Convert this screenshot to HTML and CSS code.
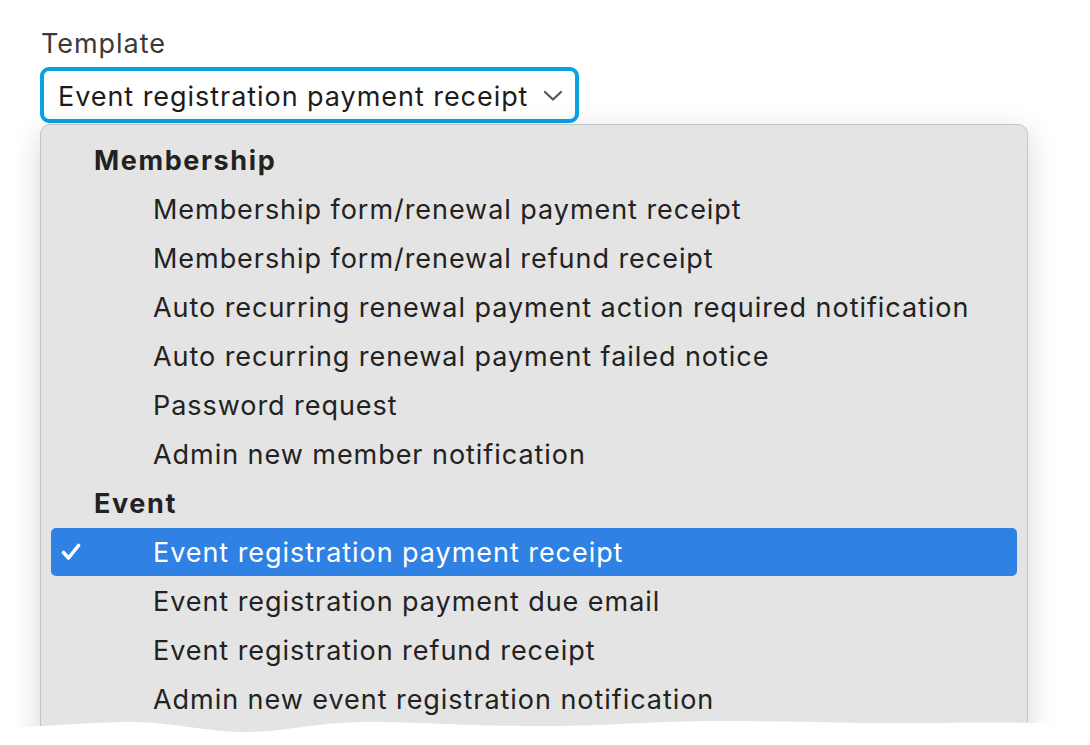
FILE: index.html
```html
<!DOCTYPE html>
<html>
<head>
<meta charset="utf-8">
<link rel="stylesheet" href="styles.css">
</head>
<body>
<div class="field">
  <div class="label">Template</div>
  <div class="select">
    <span class="select-text">Event registration payment receipt</span>
    <svg class="chevron" width="20" height="12" viewBox="0 0 20 12"><path d="M2 2 L10 9.5 L18 2" fill="none" stroke="#555" stroke-width="2.2" stroke-linecap="round" stroke-linejoin="round"/></svg>
  </div>
  <div class="menu">
    <div class="group">Membership</div>
    <div class="item">Membership form/renewal payment receipt</div>
    <div class="item">Membership form/renewal refund receipt</div>
    <div class="item">Auto recurring renewal payment action required notification</div>
    <div class="item">Auto recurring renewal payment failed notice</div>
    <div class="item">Password request</div>
    <div class="item">Admin new member notification</div>
    <div class="group">Event</div>
    <div class="item selected"><svg class="check" width="20" height="18" viewBox="0 0 20 18"><path d="M2.5 9.5 L7.5 15 L17.5 2.5" fill="none" stroke="#fff" stroke-width="3.6" stroke-linecap="round" stroke-linejoin="round"/></svg>Event registration payment receipt</div>
    <div class="item">Event registration payment due email</div>
    <div class="item">Event registration refund receipt</div>
    <div class="item">Admin new event registration notification</div>
  </div>
</div>
<svg class="tear" width="1090" height="40" viewBox="0 0 1090 40" preserveAspectRatio="none">
  <path d="M0 23 C40 22 80 18 120 17 C170 16 200 26 240 27 C280 28 310 18 360 17 C420 16 470 22 560 21 C620 20 660 16 720 16 C800 16 860 19 940 18 C1000 17 1050 18 1090 19 L1090 40 L0 40 Z" fill="#fff"/>
</svg>
</body>
</html>
```
FILE: styles.css
```css
html, body {
  margin: 0;
  padding: 0;
  background: #fff;
  overflow: hidden;
  height: 745px;
}
body {
  font-family: "Inter", "Noto Sans", sans-serif;
  color: #222;
  position: relative;
  letter-spacing: 0.95px;
}
.field {
  padding: 26px 0 0 40px;
}
.label {
  font-size: 27px;
  line-height: 36px;
  color: #3a3a3a;
  padding-left: 1px;
  margin-bottom: 5px;
}
.select {
  box-sizing: border-box;
  width: 539px;
  height: 56px;
  border: 4px solid #09a3e3;
  border-radius: 9px;
  background: #fff;
  display: flex;
  align-items: center;
  justify-content: space-between;
  padding: 2px 12px 0 14px;
  font-size: 27px;
  color: #1c1c1c;
  white-space: nowrap;
}
.menu {
  box-sizing: border-box;
  width: 988px;
  margin-top: 1px;
  background: #e4e4e4;
  border: 1px solid #c4c4c4;
  border-radius: 10px;
  box-shadow: 0 8px 30px rgba(0,0,0,0.16);
  padding: 11px 10px 0 10px;
  height: 640px;
}
.group {
  height: 49px;
  line-height: 49px;
  font-size: 27px;
  font-weight: 700;
  letter-spacing: 1.6px;
  padding-left: 43px;
  color: #222;
}
.item {
  height: 49px;
  line-height: 49px;
  font-size: 27px;
  padding-left: 102px;
  color: #222;
  border-radius: 5px;
  position: relative;
  white-space: nowrap;
}
.item.selected {
  background: #2f82e4;
  color: #fff;
  height: 48px;
  line-height: 49px;
  margin-bottom: 1px;
}
.check {
  position: absolute;
  left: 10px;
  top: 15px;
}
.tear {
  position: absolute;
  left: 0;
  top: 705px;
}
```
